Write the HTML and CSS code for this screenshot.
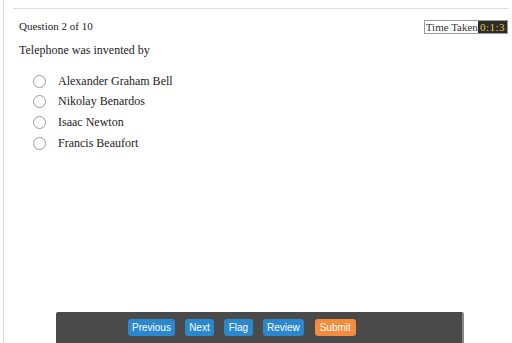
FILE: index.html
```html
<!DOCTYPE html>
<html lang="en">
<head>
  <meta charset="UTF-8">
  <title>Quiz</title>
  <link rel="stylesheet" href="styles.css">
</head>
<body>
  <div class="page">
    <div class="quiz">
      <div class="quiz-head">
        <span class="counter">Question 2 of 10</span>
        <span class="timer"><span class="timer-label">Time Taken</span><span class="timer-value">0:1:3</span></span>
      </div>
      <p class="question">Telephone was invented by</p>
      <ul class="options">
        <li><span class="radio"></span>Alexander Graham Bell</li>
        <li><span class="radio"></span>Nikolay Benardos</li>
        <li><span class="radio"></span>Isaac Newton</li>
        <li><span class="radio"></span>Francis Beaufort</li>
      </ul>
    </div>
    <div class="nav-bar">
      <button class="btn">Previous</button>
      <button class="btn">Next</button>
      <button class="btn">Flag</button>
      <button class="btn">Review</button>
      <button class="btn btn-submit">Submit</button>
    </div>
  </div>
</body>
</html>
```

FILE: styles.css
```css
html, body {
  margin: 0;
  height: 100%;
  background: #fff;
}

body {
  font-family: "Liberation Serif", "Times New Roman", serif;
  color: #222;
  overflow: hidden;
}

.page {
  height: 343px;
  margin-left: 3px;
  border-left: 1px solid #d6d6d6;
  display: flex;
  flex-direction: column;
}

.quiz {
  flex: 1;
  margin: 8px 4px 0 9px;
  border-top: 1px solid #dcdcdc;
  padding: 10px 0 0 6px;
}

.quiz-head {
  display: flex;
  justify-content: space-between;
  align-items: center;
  font-size: 11px;
}

.counter {
  margin-top: -1px;
}

.timer {
  display: flex;
  border: 1px solid #999;
  font-size: 11px;
  line-height: 12px;
  margin-top: 1px;
}

.timer-label {
  padding: 0 0 0 1px;
  color: #333;
}

.timer-value {
  background: #2b2b2b;
  color: #f5c518;
  padding: 0 2px;
  letter-spacing: 0.5px;
}

.question {
  margin: 9px 0 0;
  font-size: 12px;
}

.options {
  list-style: none;
  margin: 13px 0 0;
  padding: 0 0 0 14px;
  font-size: 12px;
}

.options li {
  display: flex;
  align-items: center;
  height: 20.6px;
}

.radio {
  width: 13px;
  height: 13px;
  border: 1px solid #9a9a9a;
  border-radius: 50%;
  margin-right: 12px;
  box-sizing: border-box;
}

.nav-bar {
  margin: 0 48px 0 52px;
  height: 31px;
  background: #4a4a4a;
  border-radius: 2px 2px 0 0;
  border-right: 2px solid #8a8a8a;
  display: flex;
  align-items: flex-start;
  gap: 9px;
  padding: 7px 0 0 72px;
  box-sizing: border-box;
}

.btn {
  font-family: "Liberation Sans", Arial, sans-serif;
  font-size: 10px;
  color: #fff;
  background: #2a88d0;
  border: none;
  border-radius: 3px;
  padding: 0 4px;
  min-width: 29px;
  height: 17px;
  line-height: 17px;
  margin-right: 1px;
}

.btn-submit {
  background: #f58b3c;
  margin-left: 1px;
  padding: 0 5px;
}
```
